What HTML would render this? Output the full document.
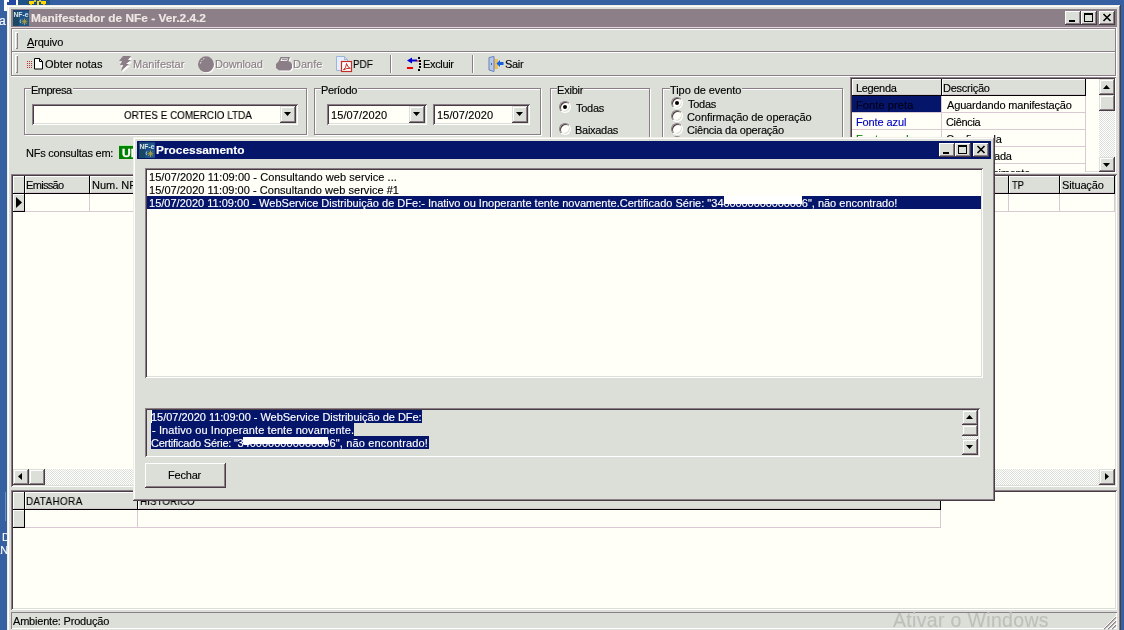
<!DOCTYPE html>
<html lang="pt-BR">
<head>
<meta charset="utf-8">
<title>Manifestador de NFe - Ver.2.4.2</title>
<style>
:root{
  --desk:#3560a2;
  --face:#dcdfd8;
  --win:#fffff8;
  --hi:#ffffff;
  --sh:#8c7e86;
  --dk:#483d44;
  --navy:#04156a;
  --grid:#d9c9d3;
}
*{box-sizing:border-box;margin:0;padding:0}
html,body{width:1124px;height:630px;overflow:hidden;background:var(--desk)}
body{position:relative;font-family:"Liberation Sans",sans-serif;font-size:11px;line-height:13px;color:#000;cursor:default}
.a{position:absolute}
.t{position:absolute;white-space:pre;line-height:13px;height:13px;will-change:transform;-webkit-text-stroke:0.14px}
.lg{will-change:transform;-webkit-text-stroke:0.14px}
.b{font-weight:bold}
.face{background:var(--face)}
.raised{background:var(--face);box-shadow:inset -1px -1px 0 var(--dk),inset 1px 1px 0 var(--hi),inset -2px -2px 0 var(--sh),inset 2px 2px 0 var(--face)}
.sbtn{background:var(--face);box-shadow:inset -1px -1px 0 var(--dk),inset 1px 1px 0 var(--face),inset -2px -2px 0 var(--sh),inset 2px 2px 0 var(--hi)}
.sunken{box-shadow:inset 1px 1px 0 var(--sh),inset -1px -1px 0 var(--hi),inset 2px 2px 0 var(--dk),inset -2px -2px 0 var(--face)}
.winframe{background:var(--face);box-shadow:inset -1px -1px 0 var(--dk),inset 1px 1px 0 #f0f0e6,inset -2px -2px 0 var(--sh),inset 2px 2px 0 var(--hi)}
.track{background:conic-gradient(#fff 25%,var(--face) 0 50%,#fff 0 75%,var(--face) 0) 0 0/2px 2px}
.grp{position:absolute;border:1px solid var(--sh);box-shadow:1px 1px 0 var(--hi),inset 1px 1px 0 var(--hi)}
.grp>.lg{position:absolute;top:-5px;left:6px;background:var(--face);padding:0 1px 0 0;line-height:13px;height:13px;white-space:pre}
.hd{position:absolute;background:var(--face);box-shadow:inset -1px -1px 0 #000,inset 1px 1px 0 var(--hi),inset 0 -2px 0 #d6c6d0;white-space:pre;line-height:13px;padding:2px 0 0 2px;overflow:hidden}
.cell{position:absolute;background:var(--win);border-right:1px solid var(--grid);border-bottom:1px solid var(--grid);white-space:pre;overflow:hidden}
.radio{position:absolute;width:12px;height:12px;border-radius:50%;background:var(--win);box-shadow:inset 1px 1px 0 var(--dk),inset -1px -1px 0 var(--face);border:1px solid;border-color:var(--sh) var(--hi) var(--hi) var(--sh)}
.radio.on::after{content:"";position:absolute;left:3px;top:3px;width:4px;height:4px;border-radius:50%;background:#000}
.dis{color:var(--sh);text-shadow:1px 1px 0 var(--hi)}
svg{position:absolute;display:block;overflow:visible;will-change:transform}
</style>
</head>
<body>
<!-- desktop fragments -->
<div class="a" style="left:4px;top:0;width:3px;height:11px;background:#fff"></div>
<div class="a" style="left:7px;top:0;width:9px;height:5px;background:#2347a2"></div>
<div class="a" style="left:7px;top:0;width:2px;height:2px;background:#fff"></div>
<div class="a" style="left:16px;top:0;width:2px;height:5px;background:#fff"></div>
<div class="a" style="left:18px;top:0;width:32px;height:5px;background:#1f5385"></div>
<div class="a" style="left:29px;top:1px;width:5px;height:3px;background:#ffd800"></div>
<div class="a" style="left:30px;top:4px;width:2px;height:1px;background:#e0b800"></div>
<div class="a" style="left:37px;top:1px;width:2px;height:4px;background:#ffd800"></div>
<div class="a" style="left:41px;top:1px;width:5px;height:3px;background:#ffd800"></div>
<div class="a" style="left:43px;top:4px;width:2px;height:1px;background:#e0b800"></div>
<div class="a" style="left:34px;top:0;width:2px;height:2px;background:#c8c060"></div>
<div class="a" style="left:39px;top:0;width:2px;height:2px;background:#c8c060"></div>
<div class="t" style="left:-1px;top:15px;color:#fff;font-size:12px;letter-spacing:0.5px">ar</div>
<div class="a" style="left:5px;top:492px;width:1px;height:29px;background:#6f8fc6"></div>
<div class="t" style="left:2px;top:531px;color:#fff;font-size:11px">D</div>
<div class="t" style="left:-7px;top:544px;color:#fff;font-size:11px">AN</div>


<!-- MAIN WINDOW -->
<div class="a winframe" id="main" style="left:7px;top:5px;width:1114px;height:640px"></div>
<!-- title bar (inactive) -->
<div class="a" style="left:11px;top:9px;width:1106px;height:18px;background:#8d7f87"></div>
<svg style="left:13px;top:10px" width="16" height="16" viewBox="0 0 16 16"><rect width="16" height="16" fill="#1f5488"/><rect width="6" height="16" fill="#1a4763"/><rect x="0" y="0" width="16" height="1" fill="#1b3f78"/><text x="0.5" y="7" font-family="Liberation Sans,sans-serif" font-size="6.500" font-weight="bold" fill="#d8e6ee" textLength="15" lengthAdjust="spacingAndGlyphs">NF-e</text><path d="M11.500 8.500v6.500M8.500 11.700h6M9.300 9.500l4.400 4.400M13.700 9.500l-4.400 4.400" stroke="#a9a03c" stroke-width="0.950"/><path d="M7.800 9.500q-1.500 1.800 0 3.600" stroke="#a8c4d8" stroke-width="1" fill="none"/></svg>
<div class="t b" id="mt" style="left:30.5px;top:12px;color:#efe9e6;font-size:11px;transform:scaleX(1.08);transform-origin:0 0">Manifestador de NFe - Ver.2.4.2</div>
<div class="a raised" style="left:1065px;top:11px;width:16px;height:14px"><div class="a" style="left:4px;top:9px;width:6px;height:2px;background:#000"></div></div>
<div class="a raised" style="left:1081px;top:11px;width:16px;height:14px"><div class="a" style="left:3px;top:2px;width:9px;height:9px;border:1px solid #000;border-top-width:2px"></div></div>
<div class="a raised" style="left:1099px;top:11px;width:16px;height:14px"><svg style="left:4px;top:3px" width="8" height="7" viewBox="0 0 8 7"><path d="M0.5 0L7.5 7M7.5 0L0.5 7" stroke="#000" stroke-width="1.6" fill="none"/></svg></div>

<!-- rebar -->
<div class="a" style="left:11px;top:27px;width:1106px;height:1px;background:#e6d9df"></div>
<div class="a" style="left:11px;top:28px;width:1105px;height:48px;border:1px solid var(--sh);box-shadow:inset 1px 1px 0 var(--hi),1px 0 0 var(--hi)"></div>
<div class="a" style="left:12px;top:51px;width:1103px;height:1px;background:var(--sh)"></div>
<div class="a" style="left:12px;top:52px;width:1103px;height:1px;background:var(--hi)"></div>
<div class="a" style="left:11px;top:76px;width:1106px;height:1px;background:var(--hi)"></div>
<div class="a" style="left:15px;top:32px;width:3px;height:17px;box-shadow:inset 1px 1px 0 var(--hi),inset -1px -1px 0 var(--sh)"></div>
<div class="a" style="left:15px;top:55px;width:3px;height:18px;box-shadow:inset 1px 1px 0 var(--hi),inset -1px -1px 0 var(--sh)"></div>
<div class="t" id="mArq" style="letter-spacing:-0.17px;left:27px;top:36px"><u>A</u>rquivo</div>

<!-- toolbar -->
<svg style="left:27px;top:56px" width="17" height="16" viewBox="0 0 17 16"><g fill="#c03030"><rect x="0" y="5" width="1" height="1"/><rect x="2" y="5" width="1" height="1"/><rect x="4" y="5" width="1" height="1"/><rect x="0" y="7" width="1" height="1"/><rect x="2" y="7" width="1" height="1"/><rect x="4" y="7" width="1" height="1"/><rect x="0" y="9" width="1" height="1"/><rect x="2" y="9" width="1" height="1"/><rect x="4" y="9" width="1" height="1"/><rect x="0" y="11" width="1" height="1"/><rect x="2" y="11" width="1" height="1"/><rect x="4" y="11" width="1" height="1"/></g><path d="M7.5 2.5h5l3 3v7.5h-8z" fill="#fff" stroke="#000" stroke-width="1"/><path d="M12.5 2.5v3h3" fill="none" stroke="#000" stroke-width="1"/></svg>
<div class="t" id="tb1" style="letter-spacing:0.00px;left:45px;top:58px">Obter notas</div>
<svg style="left:117.500px;top:56px" width="14" height="17" viewBox="0 0 14 17"><path d="M5 1h8l-3 4h3l-5 4h3l-8 7 2-6H2l2-4H1z" fill="#fff" transform="translate(1,1)"/><path d="M5 0h8l-3 4h3l-5 4h3l-8 7 2-6H2l2-4H1z" fill="#8c7e86"/></svg>
<div class="t dis" id="tb2" style="letter-spacing:0.00px;left:133px;top:58px">Manifestar</div>
<svg style="left:198px;top:56px" width="18" height="18" viewBox="0 0 18 18"><circle cx="9" cy="9.300" r="8" fill="#fff"/><circle cx="8" cy="8.300" r="8" fill="#8c7e86"/><path d="M2.500 7.500q0.500-3.500 4-5" stroke="#fff" stroke-width="0.800" fill="none" stroke-dasharray="1.500 1"/></svg>
<div class="t dis" id="tb3" style="letter-spacing:-0.14px;left:215px;top:58px">Download</div>
<svg style="left:276px;top:56px" width="17" height="17" viewBox="0 0 17 17"><g transform="translate(1,1)" fill="#fff"><path d="M4.500 1H14L12.500 5.500H14L16 8V12L14 14.500H3L0 12V8L2.500 5.500z"/></g><path d="M4.500 1H14L12.500 5.500H14L16 8V12L14 14.500H3L0 12V8L2.500 5.500z" fill="#8c7e86"/><path d="M5.500 2.500H12L11 5H4.500z" fill="#fff"/><path d="M6 3.700H11" stroke="#8c7e86" stroke-width="1"/></svg>
<div class="t dis" id="tb4" style="letter-spacing:0.00px;left:293px;top:58px">Danfe</div>
<svg style="left:336px;top:56px" width="17" height="17" viewBox="0 0 17 17"><path d="M0.5 0.5h8l3 3v11h-11z" fill="#e8eef8" stroke="#9fb4dc" stroke-width="1"/><path d="M8.500 0.500v3h3" fill="#c8d8f0" stroke="#9fb4dc"/><rect x="5.500" y="5.500" width="10" height="10" fill="#fff" stroke="#c03028" stroke-width="1.200"/><path d="M7.500 13.800q2.800-2 3-6.300q1 4 3.800 4.800q-3.500-0.300-6.800 1.500" fill="none" stroke="#c03028" stroke-width="1"/></svg>
<div class="t" id="tb5" style="letter-spacing:0.00px;transform:scaleX(0.9);transform-origin:0 0;left:353px;top:58px">PDF</div>
<div class="a" style="left:390px;top:55px;width:2px;height:18px;border-left:1px solid var(--sh);border-right:1px solid var(--hi)"></div>
<svg style="left:406px;top:56px" width="17" height="17" viewBox="0 0 17 17"><path d="M6 1.500L1 4.500L6 7.500V5.500H11V3.500H6z" fill="#0000d0"/><rect x="1" y="11" width="6" height="2" fill="#f00000"/><g fill="#000"><rect x="12" y="1" width="2" height="2"/><rect x="13" y="4" width="2" height="2"/><rect x="13" y="7" width="2" height="2"/><rect x="13" y="10" width="2" height="2"/><rect x="12" y="13" width="2" height="2"/></g><rect x="11" y="4" width="2" height="2" fill="#e06060"/></svg>
<div class="t" id="tb6" style="letter-spacing:-0.33px;left:423px;top:58px">Excluir</div>
<div class="a" style="left:472px;top:55px;width:2px;height:18px;border-left:1px solid var(--sh);border-right:1px solid var(--hi)"></div>
<svg style="left:488px;top:56px" width="17" height="17" viewBox="0 0 17 17"><rect x="6" y="3" width="4" height="10" fill="#e8c060"/><path d="M1 1.500L6 0.500V15.500L1 14z" fill="#b8c8e8" stroke="#6880b8" stroke-width="1"/><rect x="3" y="7" width="1" height="2" fill="#4060a0"/><path d="M8.500 7.500L12 4V6H15.500V9H12V11z" fill="#1060e0"/></svg>
<div class="t" id="tb7" style="letter-spacing:-0.34px;left:505px;top:58px">Sair</div>

<!-- group: Empresa -->
<div class="grp" style="left:24px;top:88px;width:283px;height:47px"><span class="lg" id="gE" style="left:6px;letter-spacing:-0.50px;">Empresa</span></div>
<div class="a sunken" style="left:32px;top:104px;width:266px;height:21px;background:var(--win)"></div>
<div class="a" style="left:33px;top:120px;width:1px;height:2px;background:#333"></div>
<div class="t" id="emp" style="left:124px;top:109px;transform:scaleX(0.9);transform-origin:0 0">ORTES E COMERCIO LTDA</div>
<div class="a sbtn" style="left:280px;top:106px;width:16px;height:17px"><svg style="left:4px;top:6px" width="7" height="4" viewBox="0 0 7 4"><path d="M0 0h7L3.500 4z" fill="#000"/></svg></div>

<!-- group: Periodo -->
<div class="grp" style="left:314px;top:88px;width:227px;height:47px"><span class="lg" id="gP" style="left:6px;letter-spacing:-0.34px;">Período</span></div>
<div class="a sunken" style="left:327px;top:104px;width:100px;height:21px;background:var(--win)"></div>
<div class="t" id="d1" style="letter-spacing:0.11px;left:331px;top:109px">15/07/2020</div>
<div class="a sbtn" style="left:409px;top:106px;width:16px;height:17px"><svg style="left:4px;top:6px" width="7" height="4" viewBox="0 0 7 4"><path d="M0 0h7L3.500 4z" fill="#000"/></svg></div>
<div class="a sunken" style="left:433px;top:104px;width:97px;height:21px;background:var(--win)"></div>
<div class="t" id="d2" style="letter-spacing:0.11px;left:437px;top:109px">15/07/2020</div>
<div class="a sbtn" style="left:512px;top:106px;width:16px;height:17px"><svg style="left:4px;top:6px" width="7" height="4" viewBox="0 0 7 4"><path d="M0 0h7L3.500 4z" fill="#000"/></svg></div>

<!-- group: Exibir -->
<div class="grp" style="left:550px;top:88px;width:100px;height:60px"><span class="lg" id="gX" style="letter-spacing:-0.20px;left:6px;">Exibir</span></div>
<div class="radio on" style="left:559px;top:101px"></div>
<div class="t" id="r1" style="letter-spacing:-0.25px;left:576px;top:102px">Todas</div>
<div class="radio" style="left:559px;top:123px"></div>
<div class="t" id="r2" style="letter-spacing:-0.28px;left:575px;top:124px">Baixadas</div>

<!-- group: Tipo de evento -->
<div class="grp" style="left:662px;top:88px;width:181px;height:60px"><span class="lg" id="gT" style="left:7px;letter-spacing:-0.08px;">Tipo de evento</span></div>
<div class="radio on" style="left:671px;top:97px"></div>
<div class="t" id="e1" style="letter-spacing:-0.25px;left:688px;top:98px">Todas</div>
<div class="radio" style="left:671px;top:110px"></div>
<div class="t" id="e2" style="letter-spacing:-0.09px;left:687px;top:111px">Confirmação de operação</div>
<div class="radio" style="left:671px;top:123px"></div>
<div class="t" id="e3" style="letter-spacing:-0.21px;left:687px;top:124px">Ciência da operação</div>
<div class="radio" style="left:671px;top:136px"></div>

<!-- NFs consultas -->
<div class="t" id="nfs" style="left:26px;top:147px;letter-spacing:-0.23px">NFs consultas em:</div>
<div class="a" style="left:119px;top:145px;width:30px;height:14px;background:#008000;border-top:1px solid #a8f0a8;overflow:hidden"><div class="t b" style="left:2.500px;top:1px;color:#fff;font-size:11px;font-weight:bold;-webkit-text-stroke:0.3px #fff;transform:scaleX(1.1);transform-origin:0 0">UF</div></div>

<!-- legend grid -->
<div class="a sunken" style="left:850px;top:77px;width:266px;height:96px;background:var(--win)"></div>
<div class="hd" style="left:852px;top:79px;width:90px;height:17px"></div>
<div class="t" id="hL" style="letter-spacing:-0.34px;left:856px;top:82px">Legenda</div>
<div class="hd" style="left:942px;top:79px;width:144px;height:17px"></div>
<div class="t" id="hD" style="letter-spacing:-0.24px;left:943px;top:82px">Descrição</div>
<div class="cell" style="left:852px;top:96px;width:90px;height:17px;background:var(--navy)"></div>
<div class="cell" style="left:942px;top:96px;width:144px;height:17px"></div>
<div class="cell" style="left:852px;top:113px;width:90px;height:17px"></div>
<div class="cell" style="left:942px;top:113px;width:144px;height:17px"></div>
<div class="cell" style="left:852px;top:130px;width:90px;height:17px"></div>
<div class="cell" style="left:942px;top:130px;width:144px;height:17px"></div>
<div class="cell" style="left:852px;top:147px;width:90px;height:17px"></div>
<div class="cell" style="left:942px;top:147px;width:144px;height:17px"></div>
<div class="cell" style="left:852px;top:164px;width:90px;height:8px;border-bottom:0"></div>
<div class="cell" style="left:942px;top:164px;width:144px;height:8px;border-bottom:0"></div>
<div class="t" id="lg1" style="letter-spacing:0.10px;left:856px;top:99px;color:#000018">Fonte preta</div>
<div class="t" id="ld1" style="left:947px;top:99px;letter-spacing:-0.16px">Aguardando manifestação</div>
<div class="t" id="lg2" style="letter-spacing:-0.11px;left:856px;top:116px;color:#0000c0">Fonte azul</div>
<div class="t" id="ld2" style="letter-spacing:-0.33px;left:946px;top:116px">Ciência</div>
<div class="t" id="lg3" style="left:856px;top:133px;color:#008000">Fonte verde</div>
<div class="t" id="ld3" style="left:946px;top:133px;letter-spacing:-0.12px">Confirmada</div>
<div class="t" id="ld4" style="left:946px;top:150px;letter-spacing:-0.16px">Não realizada</div>
<div class="a" style="left:852px;top:164px;width:234px;height:8px;overflow:hidden"><div class="t" id="ld5" style="left:94px;top:3px;letter-spacing:-0.27px">Desconhecimento</div></div>
<div class="a track" style="left:1099px;top:79px;width:16px;height:93px"></div>
<div class="a sbtn" style="left:1099px;top:79px;width:16px;height:16px"><svg style="left:4px;top:6px" width="7" height="4" viewBox="0 0 7 4"><path d="M0 4h7L3.500 0z" fill="#000"/></svg></div>
<div class="a sbtn" style="left:1099px;top:95px;width:16px;height:16px"></div>
<div class="a sbtn" style="left:1099px;top:157px;width:16px;height:15px"><svg style="left:4px;top:6px" width="7" height="4" viewBox="0 0 7 4"><path d="M0 0h7L3.500 4z" fill="#000"/></svg></div>

<!-- main grid -->
<div class="a sunken" style="left:11px;top:174px;width:1106px;height:313px;background:var(--win)"></div>
<div class="hd" style="left:13px;top:176px;width:12px;height:18px"></div>
<div class="hd" style="left:25px;top:176px;width:65px;height:18px"></div>
<div class="t" id="hE" style="letter-spacing:-0.67px;left:26px;top:179px">Emissão</div>
<div class="hd" style="left:90px;top:176px;width:60px;height:18px"></div>
<div class="t" id="hN" style="left:92px;top:179px">Num. NF.</div>
<div class="hd" style="left:150px;top:176px;width:859px;height:18px"></div>
<div class="hd" style="left:1009px;top:176px;width:51px;height:18px"></div>
<div class="t" id="hTP" style="transform:scaleX(0.86);transform-origin:0 0;left:1012px;top:179px;letter-spacing:-0.3px">TP</div>
<div class="hd" style="left:1060px;top:176px;width:55px;height:18px"></div>
<div class="t" id="hS" style="letter-spacing:-0.14px;left:1062px;top:179px">Situação</div>
<div class="hd" style="left:13px;top:194px;width:12px;height:18px"><svg style="left:3px;top:3px" width="6" height="11" viewBox="0 0 6 11"><path d="M0 0L6 5.500L0 11z" fill="#000"/></svg></div>
<div class="cell" style="left:25px;top:194px;width:65px;height:18px"></div>
<div class="cell" style="left:90px;top:194px;width:60px;height:18px"></div>
<div class="cell" style="left:150px;top:194px;width:859px;height:18px"></div>
<div class="cell" style="left:1009px;top:194px;width:51px;height:18px"></div>
<div class="cell" style="left:1060px;top:194px;width:55px;height:18px"></div>
<div class="a track" style="left:13px;top:469px;width:1102px;height:16px"></div>
<div class="a sbtn" style="left:13px;top:469px;width:16px;height:16px"><svg style="left:5px;top:4px" width="4" height="7" viewBox="0 0 4 7"><path d="M4 0v7L0 3.500z" fill="#000"/></svg></div>
<div class="a sbtn" style="left:29px;top:469px;width:16px;height:16px"></div>
<div class="a sbtn" style="left:1099px;top:469px;width:16px;height:16px"><svg style="left:6px;top:4px" width="4" height="7" viewBox="0 0 4 7"><path d="M0 0v7L4 3.500z" fill="#000"/></svg></div>

<!-- history grid -->
<div class="a sunken" style="left:11px;top:490px;width:1106px;height:120px;background:var(--win)"></div>
<div class="hd" style="left:13px;top:492px;width:12px;height:18px"></div>
<div class="hd" style="left:25px;top:492px;width:113px;height:18px"></div>
<div class="t" id="hDH" style="letter-spacing:0.43px;transform:scaleX(0.9);transform-origin:0 0;left:26px;top:495px">DATAHORA</div>
<div class="hd" style="left:138px;top:492px;width:803px;height:18px"></div>
<div class="t" id="hH" style="transform:scaleX(0.9);transform-origin:0 0;left:140px;top:495px">HISTORICO</div>
<div class="hd" style="left:13px;top:510px;width:12px;height:18px"></div>
<div class="cell" style="left:25px;top:510px;width:113px;height:18px"></div>
<div class="cell" style="left:138px;top:510px;width:803px;height:18px"></div>

<!-- status bar -->
<div class="a" style="left:11px;top:612px;width:1106px;height:17px;box-shadow:inset 1px 1px 0 var(--sh),inset -1px -1px 0 var(--hi)"></div>
<div class="t" id="amb" style="left:13px;top:615px;letter-spacing:-0.20px">Ambiente: Produção</div>
<div class="t" id="wm" style="left:893px;top:607px;height:26px;line-height:26px;font-size:19.5px;color:#bdbfb9;letter-spacing:0.33px">Ativar o Windows</div>
<svg style="left:1103px;top:616px" width="13" height="13" viewBox="0 0 13 13"><path d="M13 1L1 13M13 5L5 13M13 9L9 13" stroke="#8c7e86" stroke-width="1.400"/><path d="M13 0L0 13M13 4L4 13M13 8L8 13" stroke="#fff" stroke-width="1"/></svg>


<!-- DIALOG -->
<div class="a winframe" id="dlg" style="left:133px;top:137px;width:862px;height:364px"></div>
<div class="a" style="left:137px;top:141px;width:854px;height:18px;background:var(--navy)"></div>
<svg style="left:139px;top:142px" width="16" height="16" viewBox="0 0 16 16"><rect width="16" height="16" fill="#1f5488"/><rect width="6" height="16" fill="#1a4763"/><rect x="0" y="0" width="16" height="1" fill="#1b3f78"/><text x="0.5" y="7" font-family="Liberation Sans,sans-serif" font-size="6.500" font-weight="bold" fill="#d8e6ee" textLength="15" lengthAdjust="spacingAndGlyphs">NF-e</text><path d="M11.500 8.500v6.500M8.500 11.700h6M9.300 9.500l4.400 4.400M13.700 9.500l-4.400 4.400" stroke="#a9a03c" stroke-width="0.950"/><path d="M7.800 9.500q-1.500 1.800 0 3.600" stroke="#a8c4d8" stroke-width="1" fill="none"/></svg>
<div class="t b" id="dt" style="left:156px;top:144px;color:#fff;font-size:11px;transform:scaleX(1.08);transform-origin:0 0">Processamento</div>
<div class="a raised" style="left:939px;top:143px;width:16px;height:14px"><div class="a" style="left:4px;top:9px;width:6px;height:2px;background:#000"></div></div>
<div class="a raised" style="left:955px;top:143px;width:16px;height:14px"><div class="a" style="left:3px;top:2px;width:9px;height:9px;border:1px solid #000;border-top-width:2px"></div></div>
<div class="a raised" style="left:973px;top:143px;width:16px;height:14px"><svg style="left:4px;top:3px" width="8" height="7" viewBox="0 0 8 7"><path d="M0.5 0L7.5 7M7.5 0L0.5 7" stroke="#000" stroke-width="1.6" fill="none"/></svg></div>

<!-- listbox -->
<div class="a sunken" style="left:145px;top:168px;width:838px;height:210px;background:var(--win)"></div>
<div class="t" id="l1" style="left:149px;top:171px;letter-spacing:0.06px">15/07/2020 11:09:00 - Consultando web service ...</div>
<div class="t" id="l2" style="left:149px;top:184px;letter-spacing:0.04px">15/07/2020 11:09:00 - Consultando web service #1</div>
<div class="a" style="left:147px;top:196px;width:834px;height:13px;background:var(--navy)"></div>
<div class="t" id="l3" style="left:149px;top:197px;color:#fff"><span style="letter-spacing:0.010px">15/07/2020 11:09:00 - WebService Distribuição de DFe:- Inativo ou Inoperante tente novamente.Certificado Série: "34</span><span style="letter-spacing:-0.102px">0000000000000</span><span style="letter-spacing:-0.003px">6", não encontrado!</span></div>
<div class="a" style="left:724px;top:196px;width:78px;height:8px;background:#fff"></div>

<!-- memo -->
<div class="a sunken" style="left:145px;top:408px;width:835px;height:49px"></div>
<div class="a" style="left:151px;top:410px;width:271px;height:13px;background:var(--navy)"></div>
<div class="t" id="m1" style="letter-spacing:-0.02px;left:151px;top:411px;color:#fff;">15/07/2020 11:09:00 - WebService Distribuição de DFe:</div>
<div class="a" style="left:151px;top:423px;width:203px;height:13px;background:var(--navy)"></div>
<div class="t" id="m2" style="letter-spacing:0.10px;left:152px;top:424px;color:#fff;">- Inativo ou Inoperante tente novamente.</div>
<div class="a" style="left:151px;top:436px;width:278px;height:13px;background:var(--navy)"></div>
<div class="t" id="m3" style="left:151px;top:437px;color:#fff;"><span style="letter-spacing:-0.236px">Certificado Série: "3</span><span style="letter-spacing:0.025px">40000000000000</span><span style="letter-spacing:0.150px">6", não encontrado!</span></div>
<div class="a" style="left:243px;top:437px;width:85px;height:7px;background:#fff"></div>
<div class="a" style="left:151px;top:410px;width:1px;height:13px;background:#fff"></div>
<div class="a track" style="left:962px;top:410px;width:16px;height:45px"></div>
<div class="a sbtn" style="left:962px;top:410px;width:16px;height:15px"><svg style="left:4px;top:5px" width="7" height="4" viewBox="0 0 7 4"><path d="M0 4h7L3.500 0z" fill="#000"/></svg></div>
<div class="a sbtn" style="left:962px;top:425px;width:16px;height:11px"></div>
<div class="a sbtn" style="left:962px;top:439px;width:16px;height:16px"><svg style="left:4px;top:6px" width="7" height="4" viewBox="0 0 7 4"><path d="M0 0h7L3.500 4z" fill="#000"/></svg></div>

<!-- button -->
<div class="a raised" style="left:145px;top:463px;width:81px;height:25px"></div>
<div class="t" id="bF" style="letter-spacing:-0.20px;left:168px;top:469px">Fechar</div>

</body>
</html>
